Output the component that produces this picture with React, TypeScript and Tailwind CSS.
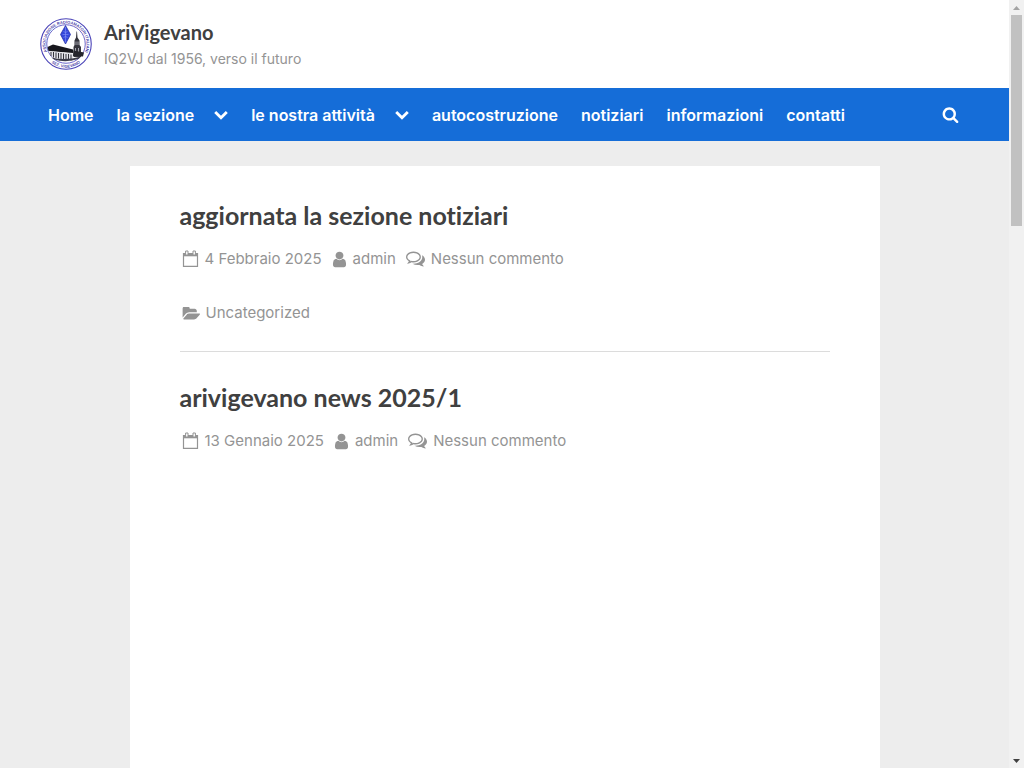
import type { ReactNode } from "react";

const navItems = [
  { label: "Home", submenu: false },
  { label: "la sezione", submenu: true },
  { label: "le nostra attività", submenu: true },
  { label: "autocostruzione", submenu: false },
  { label: "notiziari", submenu: false },
  { label: "informazioni", submenu: false },
  { label: "contatti", submenu: false },
];

const posts = [
  { title: "aggiornata la sezione notiziari", date: "4 Febbraio 2025", category: "Uncategorized" },
  { title: "arivigevano news 2025/1", date: "13 Gennaio 2025", category: null },
];

function Logo() {
  return (
    <svg viewBox="0 0 104 104" className="size-[52px]" role="img" aria-label="AriVigevano">
      <defs>
        <path id="ring-top" d="M25 83 A41 41 0 1 1 79 83" />
        <path id="ring-bottom" d="M12 77 A47 47 0 0 0 92 77" />
      </defs>
      <circle cx="52" cy="52" r="50.5" fill="#fff" stroke="#4a43b8" strokeWidth="2.2" />
      <circle cx="52" cy="52" r="38.5" fill="#fff" stroke="#5b55c4" strokeWidth="1.8" />
      <text fill="#4a43a8" fontFamily="Liberation Sans" fontWeight="700" fontSize="8">
        <textPath href="#ring-top" startOffset="50%" textAnchor="middle">
          ASSOCIAZIONE RADIOAMATORI ITALIANI
        </textPath>
      </text>
      <text fill="#4a43a8" fontFamily="Liberation Sans" fontWeight="700" fontSize="8">
        <textPath href="#ring-bottom" startOffset="50%" textAnchor="middle">
          SEZ. VIGEVANO
        </textPath>
      </text>
      {/* Antenna diamond */}
      <path d="M51 15 L61 33 L51 52 L41 33 Z" fill="#3548dc" stroke="#2530a8" strokeWidth="1.5" />
      <path d="M51 18 V49 M45 33 H57 M47 27 Q51 31 55 27 M47 39 Q51 35 55 39" fill="none" stroke="#8f9df8" strokeWidth="1.1" />
      {/* Tower */}
      <path d="M73 27 L74 27 L75 39 L79 45 V54 L82 58 V78 H67 V58 L69 54 V45 L72 39 Z" fill="#34343c" />
      <path d="M72 47 V54 M76 47 V54 M71 60 V72 M77 60 V72" stroke="#c9c9d4" strokeWidth="1.5" />
      {/* Arcade */}
      <path d="M15 58 L26 53 L66 63 V70 L17 66 Z" fill="#17171d" />
      <path d="M67 65 L88 69 L86 77 L66 76 Z" fill="#25252c" />
      <path d="M17 66 L66 71 V85 L25 80 Z" fill="#e2e2e8" />
      <path d="M22 68 V76 M27 68 V79 M32 69 V80 M37 70 V81 M42 70 V82 M47 71 V83 M52 72 V84 M57 72 V84 M62 73 V85" stroke="#34343c" strokeWidth="2" />
      <path d="M23 79 Q50 86 82 77 L77 82 Q52 90 28 83 Z" fill="#3b3b48" />
    </svg>
  );
}

function ChevronIcon() {
  return (
    <svg viewBox="0 0 14 10" className="h-[10px] w-[14px]" fill="none" stroke="currentColor" strokeWidth="2.8">
      <path d="M1.2 2 L7 7.8 L12.8 2" />
    </svg>
  );
}

function SearchIcon() {
  return (
    <svg viewBox="0 0 1792 1792" className="size-[17px]" fill="currentColor">
      <path d="M1216 832q0-185-131.5-316.5t-316.5-131.5-316.5 131.5-131.5 316.5 131.5 316.5 316.5 131.5 316.5-131.5 131.5-316.5zm512 832q0 52-38 90t-90 38q-54 0-90-38l-343-342q-179 124-399 124-143 0-273.5-55.5t-225-150-150-225-55.5-273.5 55.5-273.5 150-225 225-150 273.5-55.5 273.5 55.5 225 150 150 225 55.5 273.5q0 220-124 399l343 343q37 37 37 90z" />
    </svg>
  );
}

function CalendarIcon() {
  return (
    <svg viewBox="0 0 17 18" className="h-[18px] w-[17px]" fill="none" stroke="currentColor">
      <path d="M1.5 3.6 H15.5 V16.4 H1.5 Z" strokeWidth="1.2" />
      <path d="M1.5 5 H15.5" strokeWidth="2.6" />
      <path d="M3.6 1 H6 V5 H3.6 Z M11 1 H13.4 V5 H11 Z" fill="#fff" strokeWidth="1" />
    </svg>
  );
}

function UserIcon() {
  return (
    <svg viewBox="192 64 1408 1664" className="h-[17px] w-[15px]" fill="currentColor">
      <path d="M1536 1399q0 109-62.5 187t-150.5 78h-854q-88 0-150.5-78t-62.5-187q0-85 8.5-160.5t31.5-152 58.5-131 94-89 134.5-34.5q131 128 313 128t313-128q76 0 134.5 34.5t94 89 58.5 131 31.5 152 8.5 160.5zm-256-887q0 159-112.5 271.5t-271.5 112.5-271.5-112.5-112.5-271.5 112.5-271.5 271.5-112.5 271.5 112.5 112.5 271.5z" />
    </svg>
  );
}

function CommentsIcon() {
  return (
    <svg viewBox="0 128 1792 1664" className="h-[18px] w-[19px]" fill="currentColor">
      <path d="M704 384q-153 0-286 52t-211.5 141-78.5 191q0 82 53 158t149 132l97 56-35 84q34-20 62-39l44-31 53 10q78 14 153 14 153 0 286-52t211.5-141 78.5-191-78.5-191-211.5-141-286-52zm0-128q191 0 353.5 68.5t256.5 186.5 94 257-94 257-256.5 186.5-353.5 68.5q-86 0-176-16-124 88-278 128-36 9-86 16h-3q-11 0-20.5-8t-11.5-21q-1-3-1-6.5t.5-6.5 2-6l2.5-5 3.5-5.5 4-5 4.5-5 4-4.5q5-6 23-25t26-29.5 22.5-29 25-38.5 20.5-44q-124-72-195-177t-71-224q0-139 94-257t256.5-186.5 353.5-68.5zm822 1169q10 24 20.5 44t25 38.5 22.5 29 26 29.5 23 25q1 1 4 4.5t4.5 5 4 5 3.5 5.5l2.5 5 2 6 .5 6.5-1 6.5q-3 14-13 22t-22 7q-50-7-86-16-154-40-278-128-90 16-176 16-271 0-472-132 58 4 88 4 161 0 309-45t264-129q125-92 192-212t67-254q0-77-23-152 129 71 204 178t75 230q0 120-71 224.5t-195 176.5z" />
    </svg>
  );
}

function FolderIcon() {
  return (
    <svg viewBox="0 192 1944 1408" className="h-[13px] w-[18px]" fill="currentColor">
      <path d="M1943 952q0 31-31 66l-336 396q-43 51-120.5 86.5t-143.5 35.5h-1088q-34 0-60.5-13t-26.5-43q0-31 31-66l336-396q43-51 120.5-86.5t143.5-35.5h1088q34 0 60.5 13t26.5 43zm-343-344v160h-832q-94 0-197 47.5t-164 119.5l-337 396-5 6q0-4-.5-12.5t-.5-12.5v-960q0-92 66-158t158-66h320q92 0 158 66t66 158v32h544q92 0 158 66t66 158z" />
    </svg>
  );
}

function MetaLink({ icon, children }: { icon: ReactNode; children: ReactNode }) {
  return (
    <a href="#" className="flex items-center gap-[6px]">
      {icon}
      <span>{children}</span>
    </a>
  );
}

function Scrollbar() {
  return (
    <div className="sticky top-0 flex h-screen w-[15px] shrink-0 flex-col items-center bg-[#f1f1f1]" aria-hidden="true">
      <div className="flex h-[15px] items-center">
        <svg viewBox="0 0 7 4" className="h-1 w-[7px]" fill="#a3a3a3"><path d="M0 4 L3.5 0 L7 4 Z" /></svg>
      </div>
      <div className="flex w-full flex-1 flex-col px-[2px]">
        <div className="h-[211px] bg-[#c1c1c1]" />
      </div>
      <div className="flex h-[15px] items-center">
        <svg viewBox="0 0 7 4" className="h-1 w-[7px]" fill="#404040"><path d="M0 0 L3.5 4 L7 0 Z" /></svg>
      </div>
    </div>
  );
}

export default function App() {
  return (
    <div className="flex min-h-screen bg-[#ededed] font-['Inter',sans-serif] text-[#404040]">
      <div className="flex min-w-0 flex-1 flex-col">
        {/* Branding */}
        <header className="flex items-center gap-3 bg-white px-10 py-[17px]">
          <Logo />
          <div>
            <a href="#" className="block font-['Lato',sans-serif] text-xl leading-[30px] font-bold">AriVigevano</a>
            <p className="text-sm leading-6 text-[#949494]">IQ2VJ dal 1956, verso il futuro</p>
          </div>
        </header>

        {/* Main menu */}
        <nav className="flex h-[53px] items-center justify-between bg-[#156dd8] px-10 text-white">
          <ul className="flex items-center gap-[23px] px-2 text-base leading-6 font-semibold">
            {navItems.map((item) => (
              <li key={item.label} className="flex items-center gap-5">
                <a href="#">{item.label}</a>
                {item.submenu && (
                  <button type="button" aria-label={`Apri ${item.label}`}>
                    <ChevronIcon />
                  </button>
                )}
              </li>
            ))}
          </ul>
          <button type="button" aria-label="Cerca" className="px-[10px]">
            <SearchIcon />
          </button>
        </nav>

        {/* Posts */}
        <main className="mx-auto mt-[25px] w-full max-w-[750px] flex-1 bg-white px-[50px] pt-[30px]">
          {posts.map((post) => (
            <article key={post.title} className="mb-[26px] border-b border-[#dcdcdc] pb-[26px] last:border-0">
              <h2 className="font-['Lato',sans-serif] text-[25px] leading-[38px] font-bold [font-variant-ligatures:none]">
                <a href="#">{post.title}</a>
              </h2>
              <div className="mt-[13px] flex items-center gap-[10px] pl-[2px] text-[15px] leading-6 text-[#949494]">
                <MetaLink icon={<CalendarIcon />}>{post.date}</MetaLink>
                <MetaLink icon={<UserIcon />}>admin</MetaLink>
                <MetaLink icon={<CommentsIcon />}>Nessun commento</MetaLink>
              </div>
              {post.category && (
                <div className="mt-[30px] flex pl-[2px] text-[15px] leading-6 text-[#949494]">
                  <MetaLink icon={<FolderIcon />}>{post.category}</MetaLink>
                </div>
              )}
            </article>
          ))}
        </main>
      </div>
      <Scrollbar />
    </div>
  );
}
